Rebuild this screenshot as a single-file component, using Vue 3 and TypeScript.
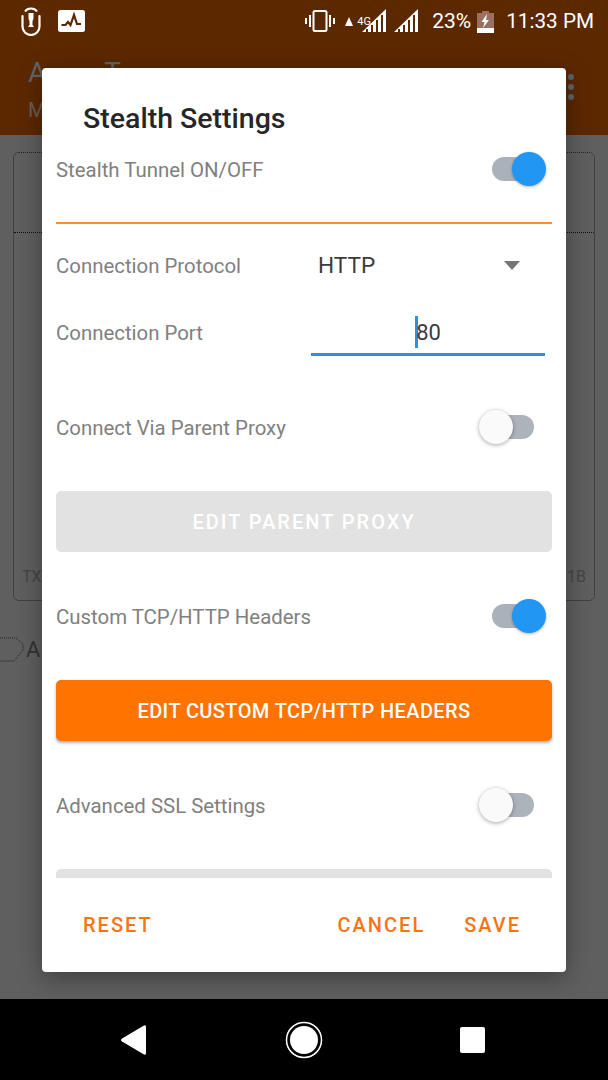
<template>
  <div class="screen">
    <!-- app behind the dialog, dimmed -->
    <header class="statusbar">
      <div class="status-left">
        <svg width="24" height="30" viewBox="0 0 24 30">
          <path d="M6 5.500C8.500 1.500 15.500 1.500 18 5.500" fill="none" stroke="#fff" stroke-width="2" />
          <path d="M3.500 10v10.500a8.500 8.500 0 0 0 17 0V10" fill="none" stroke="#fff" stroke-width="2.200" stroke-linecap="round" />
          <path d="M9.500 7h5v6l-1 2v4l1.500 2h-6l1.500-2v-4l-1-2z" fill="#fff" />
        </svg>
        <svg width="27" height="22" viewBox="0 0 27 22">
          <rect width="27" height="22" rx="2.500" fill="#fff" />
          <path d="M3.500 15h4l2.500-3 2.500 3 3.500-10 3 9h4" fill="none" stroke="#5c2800" stroke-width="2.200" />
        </svg>
      </div>
      <div class="status-right">
        <svg width="32" height="24" viewBox="0 0 32 24">
          <rect x="9.500" y="2" width="13" height="20" rx="1.500" fill="none" stroke="#fff" stroke-width="2" />
          <path d="M5 6h2v12H5zM25 6h2v12h-2zM1 9h2v6H1zM29 9h2v6h-2z" fill="#fff" />
        </svg>
        <svg class="ic-lte" width="18" height="24" viewBox="0 0 18 24">
          <path d="M1 19 5 10l4 9z" fill="#fff" />
        </svg>
        <span class="net">4G</span>
        <svg width="25" height="24" viewBox="0 0 25 24">
          <path d="M0 23 24 0v23h-3V6h-2v17h-3V11h-2v12h-3V16H9v7H6v-3H4v3z" fill="#fff" />
        </svg>
        <svg class="ic-signal" width="25" height="24" viewBox="0 0 25 24">
          <path d="M0 23 24 0v23h-3V6h-2v17h-3V11h-2v12h-3V16H9v7H6v-3H4v3z" fill="#fff" />
        </svg>
        <span class="pct">23%</span>
        <svg class="ic-batt" width="17" height="23" viewBox="0 0 17 23">
          <path d="M5 1h7v2h5v20H0V3h5z" fill="#9a7060" />
          <path d="M0 18h17v5H0z" fill="#fff" />
          <path d="M10 4 4.500 12h3L6 18l6-8H9z" fill="#fff" />
        </svg>
        <span class="clock">11:33 PM</span>
      </div>
    </header>
    <div class="appbar">
      <div class="app-title">A<span class="gap" />T</div>
      <div class="app-sub">M</div>
      <div class="dots"><i /><i /><i /></div>
    </div>
    <main class="app-body">
      <div class="card">
        <div class="card-top" />
        <div class="card-foot"><span>TX</span><span>1B</span></div>
      </div>
      <div class="behind-row">
        <svg width="26" height="28" viewBox="0 0 26 28">
          <path d="M0 3h16l7 6v6l-9 11H0" fill="none" stroke="#222" stroke-width="1" stroke-dasharray="1 1" />
        </svg>
        <span>A</span>
      </div>
    </main>
    <footer class="navbar">
      <svg width="28" height="32" viewBox="0 0 28 32">
        <path d="M26 3v26q0 2.500-2 1.500L2 17.500q-2-1.500 0-3L24 1.500Q26 .500 26 3z" fill="#fff" />
      </svg>
      <svg class="nav-home" width="38" height="38" viewBox="0 0 38 38">
        <circle cx="19" cy="19" r="17.500" fill="none" stroke="#fff" stroke-width="1.500" />
        <circle cx="19" cy="19" r="14" fill="#fff" />
      </svg>
      <div class="nav-square" />
    </footer>

    <!-- dialog -->
    <section class="dialog">
      <h2 class="dlg-title">Stealth Settings</h2>
      <div class="dlg-scroll">
        <div class="row first">
          <span class="label">Stealth Tunnel ON/OFF</span>
          <span class="switch on"><i /></span>
        </div>
        <hr class="rule" />
        <div class="row proto">
          <span class="label">Connection Protocol</span>
          <div class="select">
            <span>HTTP</span>
            <i class="caret" />
          </div>
        </div>
        <div class="row port">
          <span class="label">Connection Port</span>
          <div class="input"><span class="cursor" />80</div>
        </div>
        <div class="row parent">
          <span class="label">Connect Via Parent Proxy</span>
          <span class="switch off"><i /></span>
        </div>
        <button class="btn disabled">EDIT PARENT PROXY</button>
        <div class="row custom">
          <span class="label">Custom TCP/HTTP Headers</span>
          <span class="switch on"><i /></span>
        </div>
        <button class="btn primary">EDIT CUSTOM TCP/HTTP HEADERS</button>
        <div class="row ssl">
          <span class="label">Advanced SSL Settings</span>
          <span class="switch off"><i /></span>
        </div>
        <button class="btn disabled" />
      </div>
      <div class="dlg-actions">
        <span class="action">RESET</span>
        <span class="spacer" />
        <span class="action">CANCEL</span>
        <span class="action">SAVE</span>
      </div>
    </section>
  </div>
</template>

<script setup lang="ts">
</script>

<style>
body {
  background: #000;
}
</style>

<style scoped>
.screen {
  position: relative;
  width: 608px;
  height: 1080px;
  display: flex;
  flex-direction: column;
  overflow: hidden;
  background: #5e5f5e;
  font-family: Roboto, "Liberation Sans", sans-serif;
}

.statusbar {
  height: 42px;
  display: flex;
  justify-content: space-between;
  align-items: center;
  background: #5c2800;
  color: #fff;
}

.status-left {
  display: flex;
  align-items: center;
  gap: 15px;
  margin-left: 19px;
}

.status-right {
  position: relative;
  display: flex;
  align-items: center;
  margin-right: 14px;
}

.ic-lte {
  margin-left: 8px;
  margin-top: -5px;
}

.net {
  position: absolute;
  left: 53px;
  top: 7px;
  font-size: 11px;
  line-height: 11px;
}

.ic-signal {
  margin-left: 7px;
}

.pct {
  margin-left: 13px;
  font-size: 21px;
}

.ic-batt {
  margin-left: 6px;
}

.clock {
  margin-left: 12px;
  font-size: 20.700px;
}

.appbar {
  position: relative;
  height: 93px;
  background: #5c2800;
  color: #5f6466;
}

.app-title {
  position: absolute;
  left: 28px;
  top: 14px;
  font-size: 28px;
  line-height: 34px;
}

.gap {
  display: inline-block;
  width: 58px;
}

.app-sub {
  position: absolute;
  left: 28px;
  top: 56px;
  font-size: 20px;
  color: #67614f;
}

.dots {
  position: absolute;
  left: 568px;
  top: 32px;
  display: flex;
  flex-direction: column;
  gap: 4px;
}

.dots i {
  width: 6px;
  height: 6px;
  border-radius: 50%;
  background: #5f6466;
}

.app-body {
  flex: 1;
  padding: 17px 13px 0;
}

.card {
  height: 447px;
  border: 1px dotted #222;
  border-radius: 6px;
  display: flex;
  flex-direction: column;
  justify-content: space-between;
}

.card-top {
  height: 79px;
  border-bottom: 1px dotted #111;
}

.card-foot {
  display: flex;
  justify-content: space-between;
  padding: 0 8px 14px;
  color: #444;
  font-size: 16px;
}

.behind-row {
  display: flex;
  align-items: center;
  margin: 34px 0 0 -13px;
  color: #333;
  font-size: 22px;
}

.navbar {
  height: 81px;
  display: flex;
  align-items: center;
  background: #000;
  padding: 0 0 0 120px;
}

.nav-home {
  margin-left: 137px;
}

.nav-square {
  width: 25px;
  height: 26px;
  margin-left: 137px;
  border-radius: 2px;
  background: #fff;
}

.dialog {
  position: absolute;
  left: 42px;
  top: 68px;
  width: 524px;
  height: 904px;
  display: flex;
  flex-direction: column;
  border-radius: 4px;
  background: #fff;
  box-shadow: 0 6px 24px rgba(0, 0, 0, 0.35);
}

.dlg-title {
  margin: 0;
  height: 82px;
  padding: 34px 0 0 41px;
  box-sizing: border-box;
  font-size: 28.500px;
  line-height: 34px;
  font-weight: 500;
  color: #262626;
}

.dlg-scroll {
  height: 728px;
  padding: 0 14px;
  overflow: hidden;
}

.row {
  display: flex;
  align-items: center;
  justify-content: space-between;
  height: 38px;
}

.label {
  padding-top: 2px;
  font-size: 20.400px;
  color: #808080;
}

.rule {
  height: 2px;
  margin: 34px 0 0;
  border: 0;
  background: #f0923c;
}

.row.proto {
  margin-top: 22px;
}

.row.port {
  margin-top: 32px;
  height: 40px;
  align-items: flex-start;
}

.row.port .label {
  margin-top: 3px;
}

.row.parent {
  margin-top: 52px;
}

.row.custom,
.row.ssl {
  margin-top: 45px;
}

.select {
  width: 234px;
  display: flex;
  align-items: center;
  justify-content: space-between;
  font-size: 22.600px;
  color: #3c3c3c;
}

.caret {
  width: 0;
  height: 0;
  margin-right: 32px;
  border-left: 8.500px solid transparent;
  border-right: 8.500px solid transparent;
  border-top: 9px solid #757575;
}

.input {
  width: 234px;
  height: 40px;
  box-sizing: border-box;
  padding-top: 2px;
  margin-right: 7px;
  display: flex;
  align-items: flex-start;
  justify-content: center;
  border-bottom: 3px solid #2f8fdc;
  font-size: 22px;
  line-height: 30px;
  color: #3c3c3c;
}

.cursor {
  width: 3px;
  height: 32px;
  margin-right: -2px;
  margin-top: -2px;
  background: #2f8fdc;
}

.switch {
  position: relative;
  width: 42px;
  height: 24px;
  margin-right: 18px;
  border-radius: 12px;
  background: #adb3bb;
}

.switch i {
  position: absolute;
  top: -5px;
  width: 34px;
  height: 34px;
  border-radius: 50%;
}

.switch.on {
  width: 46px;
  margin-right: 14px;
  background: #a9b1ba;
}

.switch.on i {
  right: -8px;
  background: #2196f3;
  box-shadow: 0 1px 3px rgba(0, 0, 0, 0.3);
}

.switch.off i {
  left: -13px;
  background: #fafafa;
  box-shadow: 0 1px 4px rgba(0, 0, 0, 0.35);
}

.btn {
  display: block;
  width: 100%;
  height: 61px;
  border: 0;
  border-radius: 5px;
  font-family: inherit;
  font-size: 20px;
  font-weight: 500;
}

.btn.disabled {
  margin-top: 45px;
  background: #e2e2e2;
  color: #fff;
  letter-spacing: 2px;
}

.btn.primary {
  margin-top: 45px;
  background: #ff7300;
  color: #fff;
  letter-spacing: 0.400px;
  box-shadow: 0 2px 3px rgba(0, 0, 0, 0.3);
}

.dlg-actions {
  flex: 1;
  display: flex;
  align-items: center;
  padding: 0 45px 0 41px;
  gap: 39px;
}

.spacer {
  flex: 1;
}

.action {
  font-size: 20px;
  font-weight: 500;
  letter-spacing: 2px;
  color: #f57417;
}
</style>
